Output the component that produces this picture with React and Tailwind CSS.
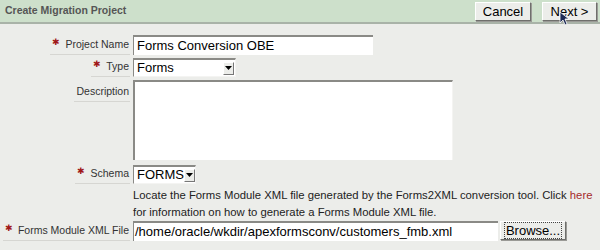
import React from 'react'

const sans = { fontFamily: '"Liberation Sans", Arial, sans-serif' }

const Req = () => <span className="text-[#a01818] text-[9px] leading-none mr-[5px] relative top-[-3px]">✱</span>

const Label = ({ children, req, top }) => (
  <div className={`w-[130px] shrink-0 flex justify-end ${top ? 'items-start pt-[4px]' : 'items-end'}`}>
    <div className="flex items-center whitespace-nowrap border-b border-[#d6d6d2] pl-[2px] pr-[1px] pb-[1px] text-[10.5px] text-[#333]">
      {req && <Req />}
      {children}
    </div>
  </div>
)

const Combo = ({ value, width }) => (
  <div className={`${width} h-[19px] bg-white border-t-2 border-l border-[#8a8a86] border-r border-b border-r-[#f4f4f2] border-b-[#f4f4f2] flex items-center justify-between pl-[3px] pr-[1px] text-[13px] text-black overflow-hidden`}>
    <span className="whitespace-nowrap">{value}</span>
    <span className="w-[11px] h-[13px] shrink-0 bg-[#ecedea] border border-t-white border-l-white border-r-[#777] border-b-[#777] flex items-center justify-center">
      <svg width="7" height="5" viewBox="0 0 7 5"><path d="M0 0h7L3.5 4z" fill="#000" /></svg>
    </span>
  </div>
)

const Btn = ({ children, dotted, w }) => (
  <button className={`${w} h-[19px] bg-[#ecedea] border border-t-white border-l-white border-r-[#6f6f6c] border-b-[#6f6f6c] shadow-[1px_1px_0_#9a9a96] text-[13px] text-black leading-none whitespace-nowrap flex items-center justify-center`}>
    <span className={dotted ? 'outline outline-1 outline-dotted outline-[#444] px-[1px] py-[1px]' : ''}>{children}</span>
  </button>
)

export default function App() {
  return (
    <div style={sans} className="w-[600px] h-[250px] bg-[#ecedea] overflow-hidden">
      <div className="h-[24px] bg-[#cde0cb] border-b-2 border-[#a9b3a8] flex items-center justify-between pl-[5px] pr-[3px]">
        <span className="text-[10.5px] font-bold text-[#555]">Create Migration Project</span>
        <div className="relative flex gap-[11px] pt-[1px]">
          <Btn w="w-[56px]">Cancel</Btn>
          <Btn w="w-[55px]">Next &gt;</Btn>
          <svg className="absolute left-[84px] top-[10px]" width="10" height="15" viewBox="0 0 10 15">
            <path d="M1 1v11l3-3 2 5 2-1-2-5h4z" fill="#1d2a55" stroke="#fff" strokeWidth="0.8" />
          </svg>
        </div>
      </div>

      <div className="pt-[11px] flex flex-col">
        <div className="flex gap-[3px] h-[20px]">
          <Label req>Project Name</Label>
          <div className="w-[240px] h-[20px] bg-white border-t-2 border-l border-[#8a8a86] pl-[3px] text-[13px] text-black leading-[18px] whitespace-nowrap">Forms Conversion OBE</div>
        </div>

        <div className="flex gap-[3px] mt-[3px] h-[19px]">
          <Label req>Type</Label>
          <Combo value="Forms" width="w-[103px]" />
        </div>

        <div className="flex gap-[3px] mt-[3px]">
          <Label top>Description</Label>
          <div className="w-[320px] h-[80px] bg-white border-t-2 border-l-2 border-[#8a8a86] border-r border-r-[#f4f4f2]" />
        </div>

        <div className="flex gap-[3px] mt-[5px] h-[19px]">
          <Label req>Schema</Label>
          <Combo value="FORMS" width="w-[63px]" />
        </div>

        <div className="ml-[133px] mt-[3px] text-[11.3px] text-[#222] leading-[17px] whitespace-nowrap">
          <div>Locate the Forms Module XML file generated by the Forms2XML conversion tool. Click <span className="text-[#a52a2a]">here</span></div>
          <div>for information on how to generate a Forms Module XML file.</div>
        </div>

        <div className="flex gap-[3px] h-[20px]">
          <Label req>Forms Module XML File</Label>
          <div className="flex items-start gap-[2px]">
            <div className="w-[365px] h-[20px] bg-white border-t-2 border-l border-[#8a8a86] pl-[1px] text-[13px] text-black leading-[18px] whitespace-nowrap overflow-hidden">/home/oracle/wkdir/apexformsconv/customers_fmb.xml</div>
            <Btn dotted w="w-[66px]">Browse...</Btn>
          </div>
        </div>
      </div>
    </div>
  )
}
